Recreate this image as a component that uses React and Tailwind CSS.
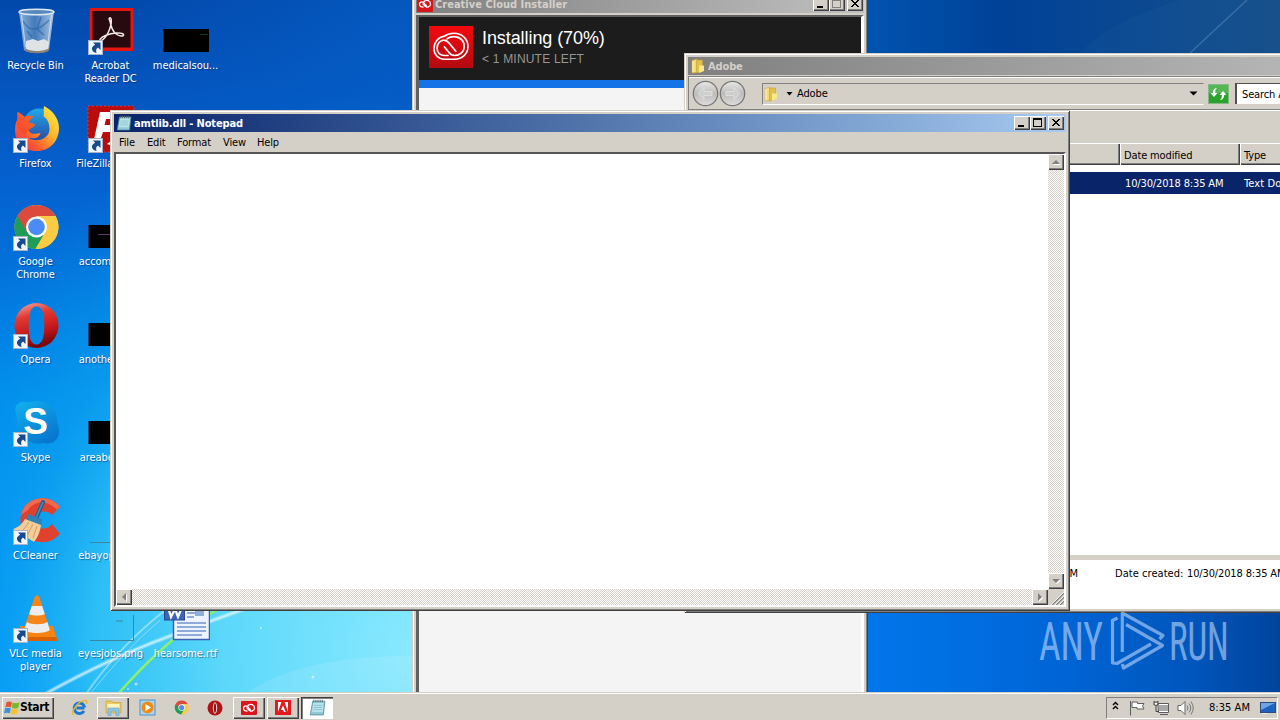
import React from 'react';
import clsx from 'clsx';

const RAISED = 'bg-[#d4d0c8] shadow-[inset_1px_1px_0_#fff,inset_-1px_-1px_0_#404040,inset_-2px_-2px_0_#808080]';
const FRAME = 'bg-[#d4d0c8] shadow-[inset_1px_1px_0_#d4d0c8,inset_-1px_-1px_0_#404040,inset_2px_2px_0_#fff,inset_-2px_-2px_0_#808080]';
const DITHER = 'bg-[repeating-conic-gradient(#fff_0_25%,#d4d0c8_0_50%)] bg-[length:2px_2px]';

/* ---------- small shared drawings ---------- */

const ShortcutArrow = () => (
    <svg className="absolute left-[1px] bottom-0 w-[15px] h-[15px]" viewBox="0 0 15 15">
        <rect x=".5" y=".5" width="14" height="14" fill="#f2f5fa" stroke="#a5b4c8" />
        <path d="M5 2.500h7.500v7.500l-2.500-2.500C8.200 8.500 7.600 10.300 8.600 13 3.500 12 2 7 7.200 4.700z" fill="#174a8c" />
    </svg>
);

const ChromeLogo = ({ className }) => (
    <svg className={className} viewBox="0 0 48 48">
        <circle cx="24.500" cy="24" r="22" fill="#fbcb43" />
        <path d="M24.500 24 5.400 13A22 22 0 0 1 43.600 13z" fill="#dc4a3d" />
        <path d="M5.400 13A22 22 0 0 0 23.500 46l10-17-9-5z" fill="#1f9d58" />
        <path d="M24.500 13h19.100A22 22 0 0 1 23.500 46l10-17z" fill="#fbcb43" />
        <path d="M5.400 13 15 29 24.500 13z" fill="#dc4a3d" />
        <circle cx="24.500" cy="24" r="10.500" fill="#fff" />
        <circle cx="24.500" cy="24" r="8.300" fill="#4c8bf5" />
    </svg>
);

const OperaLogo = ({ className }) => (
    <svg className={className} viewBox="0 0 48 48">
        <defs>
            <linearGradient id="opera" x1="0" y1="0" x2=".3" y2="1">
                <stop offset="0" stopColor="#f6b0a8" />
                <stop offset=".35" stopColor="#e23a34" />
                <stop offset=".75" stopColor="#c31418" />
                <stop offset="1" stopColor="#7d080c" />
            </linearGradient>
        </defs>
        <path
            fillRule="evenodd"
            d="M24.500 2a22 22.500 0 1 0 0 45a22 22.500 0 1 0 0-45zM24.500 5.500c6 0 7.800 8 7.800 19s-1.800 19-7.800 19-7.800-8-7.800-19 1.800-19 7.800-19z"
            fill="url(#opera)"
        />
    </svg>
);

const NotepadIcon = ({ className }) => (
    <svg className={className} viewBox="0 0 16 16">
        <path d="M3.500 2h11.500l-1.500 13H1.200z" fill="#8fc9d6" stroke="#4b8797" strokeWidth=".7" />
        <path d="M4 3.500h9.800l-1 8.800H2.800z" fill="#b9e4ea" />
        <path d="M4.500 6h8M4.200 8h8M4 10h8" stroke="#78b4c4" strokeWidth=".6" />
        <path d="M4.500.7v2.500M6.500.7v2.500M8.500.7v2.500M10.500.7v2.500M12.500.7v2.500" stroke="#56646c" strokeWidth=".8" />
    </svg>
);

const FolderIcon = ({ className }) => (
    <svg className={className} viewBox="0 0 16 16">
        <path d="M2 2.500 7 1v13.500L2 15z" fill="#f2dc74" stroke="#c9a63c" strokeWidth=".5" />
        <path d="M6.500 2h6v11.500l-6 1.500z" fill="#e3c04c" stroke="#bd9a34" strokeWidth=".5" />
        <path d="M9 7.500h5v5.500l-5 2z" fill="#f7e88e" />
        <path d="M3 3v11" stroke="#fff6bb" />
    </svg>
);

const CreativeCloudMark = ({ className }) => (
    <svg className={className} viewBox="0 0 44 42">
        <g fill="none" stroke="#fff" strokeLinecap="round">
            <path d="M15.200 10.300C18 8.200 21.500 7.300 25 7.300c8 0 14 5.800 14 13.200s-6 12.700-13.500 12.700H15.500C9 33.200 5 28.500 5 22.500c0-6.500 4.500-11.500 10.200-12.200z" strokeWidth="1.500" />
            <path d="M18 12.800C20 11.200 22.300 10.600 25 10.600c6 0 10.200 4.400 10.200 9.600 0 5.500-4 9.300-9.700 9.300-2.800 0-4.500-1.500-6-3.500L15.500 21" strokeWidth="1.700" />
            <path d="M26.800 25.300 20 17c-1.500-1.800-3-2.900-5-2.900-4 0-6.900 3.600-6.900 7.900 0 4.500 3 7.500 7.400 7.500H19" strokeWidth="1.700" />
        </g>
    </svg>
);

/* reduced mark for 16px slots */
const MiniCloud = ({ className }) => (
    <svg className={className} viewBox="0 0 16 14">
        <path
            d="M9.500 9 6.800 5.800C4.500 3.800 2.500 5.500 2.500 7.300c0 2 1.600 3 3.500 2.700M7 4.500c2.500-2.200 6.500-.8 6.500 2.500 0 3-3.500 4-5.300 2.300L6 7"
            fill="none" stroke="#fff" strokeWidth="1.300" strokeLinecap="round"
        />
    </svg>
);

const WindowsFlag = ({ className }) => (
    <svg className={className} viewBox="0 0 16 16">
        <path d="M2.500 2.200Q5 .7 8 2.200L7 7.500Q4.500 6.200 1.300 7.500z" fill="#e4572e" />
        <path d="M8.700 2.500Q11.500 4 15.500 2.500L14.300 7.800Q11 9 7.800 7.700z" fill="#76b82a" />
        <path d="M1.100 8.300Q4 7 6.800 8.300L5.800 13.300Q3 12 0 13.300z" fill="#3c8fd8" />
        <path d="M7.500 8.600Q10.500 10 14 8.700L12.900 13.800Q9.500 15.200 6.500 13.700z" fill="#f8c22c" />
    </svg>
);

/* ---------- desktop icons ---------- */

const RecycleBin = () => (
    <svg className="w-12 h-12" viewBox="0 0 48 48">
        <defs>
            <linearGradient id="bin" x1="0" x2="1">
                <stop offset="0" stopColor="#a7c4df" />
                <stop offset=".45" stopColor="#4c82bd" />
                <stop offset="1" stopColor="#c9d9e8" />
            </linearGradient>
        </defs>
        <path d="M7 4 12 43c3 3.500 22 3.500 25 0L42 4z" fill="url(#bin)" opacity=".85" />
        <path d="m14 34 7-2 5 2 6-2 5 3-1 8c-4 3-19 3-22 0z" fill="#dfe3e6" />
        <path d="M13 41c4 4 20 4 24 0l-.5 3c-4 3-19 3-23 0z" fill="#8c8177" />
        <ellipse cx="24.500" cy="5" rx="17.500" ry="2.700" fill="#5789bd" stroke="#dce8f2" strokeWidth="1.500" />
        <path d="M11 14q5 9 12 8t14-9M29 10l-4 12 7 6M15 24l5 6" stroke="#2a5f9c" strokeWidth="1.500" fill="none" opacity=".6" />
        <path d="m9.500 8 4 32M39.500 8l-4 32" stroke="#e6f0f7" opacity=".7" />
    </svg>
);

const AcrobatIcon = () => (
    <svg className="w-12 h-12" viewBox="0 0 48 48">
        <rect x="2.500" y="1" width="44" height="43" fill="#e6150f" />
        <rect x="5.500" y="4" width="38" height="36.500" fill="#270a0f" />
        <path
            d="M23 14c-2-3 .8-5 1.300-1.200.4 7.500-5 18.700-10.300 21-2.500.5-1.500-3 5-5.500 6-2.300 16-3.300 17.500-.8.700 2.500-4.500 2-8-1-4-3.500-4.600-7.500-5.500-12.500z"
            fill="none" stroke="#f4e9e7" strokeWidth="1.500"
        />
    </svg>
);

const FirefoxIcon = () => (
    <svg className="w-12 h-12" viewBox="0 0 48 48">
        <defs>
            <linearGradient id="fox" x1="1" y1="0" x2="0" y2="1">
                <stop offset="0" stopColor="#fff34a" />
                <stop offset=".4" stopColor="#ffb52a" />
                <stop offset=".7" stopColor="#fb5a30" />
                <stop offset="1" stopColor="#e02a5c" />
            </linearGradient>
            <linearGradient id="globe" x2="0" y2="1">
                <stop offset="0" stopColor="#1fa9e8" />
                <stop offset="1" stopColor="#2a4fa8" />
            </linearGradient>
        </defs>
        <circle cx="27" cy="19" r="15.500" fill="url(#globe)" />
        <path
            d="M32 1c8 4 15 12 15 22 0 13-9 23-22 23C12 46 3 38 3 25c0-4 .5-8 2.500-10.500V7c3 1 5 3 7 5 3-1.500 6-1.500 9-.5-2 1-5 4-4.500 6l6 2c-.5 3-5.500 3.500-6.500 6 3 5 8 3 12 2.500-2 6-8 6-12 4.500 7 6 21.500 1.500 21-9C37.300 17 35 14 31.500 11c1-4-.5-7 .5-10z"
            fill="url(#fox)"
        />
        <path d="M5.500 7c3 1 5 3 7 5 3-1.500 6-1.500 9-.5-2 1-5 4-4.500 6l6 2c-.5 3-5.500 3.500-6.500 6l-3 5c-6-2-11-10-8-16z" fill="#f4482f" opacity=".75" />
    </svg>
);

const FileZillaIcon = () => (
    <svg className="w-12 h-12" viewBox="0 0 48 48">
        <rect x="1" y="1" width="46" height="46" fill="#b90d0d" stroke="#d93a3a" strokeDasharray="2 2" />
        <path d="M13 7h27l-2 7H19l-1.500 6H33l-2 7H16l-4 12H6z" fill="#fff" />
        <path d="m20 39 8-6 8 2-8 7z" fill="#fff" />
    </svg>
);

const SkypeIcon = () => (
    <div className="relative w-12 h-12">
        <svg className="w-12 h-12" viewBox="0 0 48 48">
            <defs>
                <linearGradient id="skype" x2=".7" y2="1">
                    <stop offset="0" stopColor="#12b2ee" />
                    <stop offset="1" stopColor="#0676cf" />
                </linearGradient>
            </defs>
            <path d="M4 15C1 7 7 2 14 3c3 1 6-1 10-1 13 0 21 9 21 20 0 4 3 6 2 12-1 8-8 12-15 10-15 3-27-6-27-19 0-4 0-6-1-10z" fill="url(#skype)" />
        </svg>
        <span className="absolute inset-0 flex items-center justify-center pb-[3px] font-['Liberation_Sans',sans-serif] text-[37px] font-bold leading-none tracking-normal text-white">S</span>
    </div>
);

const CCleanerIcon = () => (
    <svg className="w-12 h-12" viewBox="0 0 48 48">
        <path d="M48 10C38-4 13-1 9 18 5 38 25 52 42 42l6-5-8-10c-5 7-16 6-17-3 0-9 10-13 17-6z" fill="#e0412f" />
        <path d="M48 10C38-4 13-1 9 18l7-5C22 3 37 3 45 13z" fill="#f2694c" />
        <path d="m31 5-7 17" stroke="#1d5f91" strokeWidth="4" strokeLinecap="round" />
        <path d="m31 5-6.500 15" stroke="#3696c8" strokeWidth="1.500" />
        <path d="m16 17 14 5-1 7-15-6z" fill="#2e82b8" />
        <path d="M13 22 29 28c-1 7-3 12-7 17L1 32c6-2 9-5 12-10z" fill="#f4cc98" />
        <path d="M17 25 9 36M21 27l-6 12M25 29l-4 12" stroke="#d39d60" />
    </svg>
);

const VlcIcon = () => (
    <svg className="w-12 h-12" viewBox="0 0 48 48">
        <path d="M8 31h33l4.500 14.500H12z" fill="#f58310" />
        <path d="M10 42h34.500l1 4H12z" fill="#d96207" />
        <path d="M22.500 2.500c1-3 4-3 5 0L38 35c-4 5-22 5-26.500 0z" fill="#f7861a" />
        <path d="M19.800 11h10.400l2.600 8c-4 2-12 2-15.600 0zM15 27c4 3 16 3 20.400 0l2.400 8c-4 4-22 4-26 0z" fill="#ededed" />
    </svg>
);

const WordDocIcon = () => (
    <svg className="w-12 h-12" viewBox="0 0 48 48">
        <rect x="11.500" y="1.500" width="36" height="43" fill="#eef4ff" stroke="#3c62ad" strokeWidth="1.500" />
        <path d="M25 18h8M25 22h7M15 28h29M15 32h29M15 36h29M15 40h25" stroke="#6f93d1" strokeWidth="1.300" />
        <rect x="33" y="14" width="9" height="7" fill="#91add9" />
        <rect x="2.500" y="5" width="20" height="20" fill="#3d66ba" stroke="#27488f" />
        <path d="m6 12 3 10 4-8 3 8 4-10" fill="none" stroke="#fff" strokeWidth="2.200" />
    </svg>
);

const BlackThumb = ({ line }) => (
    <svg className="w-12 h-12" viewBox="0 0 48 48">
        <rect x="1.500" y="22" width="45.500" height="23" fill="#000" />
        {line && <path d={line.d} stroke={line.color} />}
    </svg>
);

const ClearThumb = () => (
    <svg className="w-12 h-12" viewBox="0 0 48 48">
        <path d="M3 45.500h43.500V20M29 26h7" fill="none" stroke="#3c87a0" strokeWidth="1" />
    </svg>
);

const DesktopIcon = ({ icon, label, shortcut }) => (
    <div className="flex h-[98px] w-[75px] shrink-0 flex-col items-center pt-[7px]">
        {icon && <div className="relative h-12 w-12">{icon}{shortcut && <ShortcutArrow />}</div>}
        <p className="mt-[4px] whitespace-pre text-center leading-[13px] tracking-[-0.050px] text-white [text-shadow:1px_1px_1px_rgba(0,30,80,.5)]">{label}</p>
    </div>
);

const COLUMNS = [
    [
        { label: 'Recycle Bin', icon: <RecycleBin /> },
        { label: 'Firefox', icon: <FirefoxIcon />, shortcut: true },
        { label: 'Google\nChrome', icon: <ChromeLogo className="w-12 h-12" />, shortcut: true },
        { label: 'Opera', icon: <OperaLogo className="w-12 h-12" />, shortcut: true },
        { label: 'Skype', icon: <SkypeIcon />, shortcut: true },
        { label: 'CCleaner', icon: <CCleanerIcon />, shortcut: true },
        { label: 'VLC media\nplayer', icon: <VlcIcon />, shortcut: true },
    ],
    [
        { label: 'Acrobat\nReader DC', icon: <AcrobatIcon />, shortcut: true },
        { label: 'FileZilla Client', icon: <FileZillaIcon />, shortcut: true },
        { label: 'accommod...', icon: <BlackThumb line={{ d: 'M11 31.500h26', color: '#5a3a66' }} /> },
        { label: 'anotherhot...', icon: <BlackThumb /> },
        { label: 'areabegin....', icon: <BlackThumb /> },
        { label: 'ebayoption...', icon: <ClearThumb /> },
        { label: 'eyesjobs.png', icon: <ClearThumb /> },
    ],
    [
        { label: 'medicalsou...', icon: <BlackThumb line={{ d: 'M38 27.500h8', color: '#16352a' }} /> },
        {}, {}, {}, {}, {},
        { label: 'hearsome.rtf', icon: <WordDocIcon /> },
    ],
];

const Wallpaper = () => (
    <svg className="absolute inset-0 h-full w-full" viewBox="0 0 1280 720" preserveAspectRatio="none">
        <defs>
            <linearGradient id="base" x1="0" y1="0" x2="0" y2="1">
                <stop offset="0" stopColor="#0349ac" />
                <stop offset=".25" stopColor="#0561cf" />
                <stop offset=".55" stopColor="#008aea" />
                <stop offset="1" stopColor="#0095fb" />
            </linearGradient>
            <linearGradient id="shade" x1="0" x2="1">
                <stop offset=".6" stopColor="#0078ec" stopOpacity="0" />
                <stop offset=".68" stopColor="#0076ea" />
                <stop offset=".82" stopColor="#0066d8" />
                <stop offset=".93" stopColor="#0056bc" />
                <stop offset="1" stopColor="#00449c" />
            </linearGradient>
            <linearGradient id="top" x1="0" x2="1">
                <stop offset=".1" stopColor="#0560c8" stopOpacity="0" />
                <stop offset=".3" stopColor="#0560c8" stopOpacity=".6" />
                <stop offset=".68" stopColor="#0053ae" />
                <stop offset=".78" stopColor="#004299" />
                <stop offset="1" stopColor="#164e88" />
            </linearGradient>
            <radialGradient id="glow" gradientUnits="userSpaceOnUse" cx="420" cy="650" r="560">
                <stop offset="0" stopColor="#8beaff" />
                <stop offset=".35" stopColor="#5cd8fa" />
                <stop offset=".58" stopColor="#32c4f6" stopOpacity=".9" />
                <stop offset=".74" stopColor="#12aaf2" stopOpacity=".5" />
                <stop offset="1" stopColor="#0099f0" stopOpacity="0" />
            </radialGradient>
        </defs>
        <rect width="1280" height="720" fill="url(#base)" />
        <rect width="1280" height="720" fill="url(#glow)" />
        <rect y="500" width="1280" height="220" fill="url(#shade)" />
        <rect width="1280" height="112" fill="url(#top)" />
        <path d="M1190 53 1247 0" stroke="#5c8dbd" strokeWidth="1.500" opacity=".55" />
        <path d="M1080 53Q1110 20 1180 0h100v53z" fill="#2c6ba6" opacity=".12" />
        <g fill="none" stroke="#fff">
            <path d="M45 694Q110 658 170 636T250 607" strokeWidth="4" opacity=".35" />
            <path d="M45 694Q110 658 170 636T250 607" strokeWidth="1.500" opacity=".5" />
            <path d="M86 694Q120 645 168 608" strokeWidth="2" opacity=".4" />
            <path d="M90 694Q125 650 160 620" strokeWidth="1" opacity=".4" />
        </g>
        <path d="M118 694Q150 658 174 639T222 607" fill="none" stroke="#8cf06a" strokeWidth="2.500" />
        <path d="M245 694Q300 655 415 656v38z" fill="#fff" opacity=".1" />
        <g fill="#fff" opacity=".6">
            <circle cx="136" cy="684" r="1.500" />
            <circle cx="128" cy="689" r="1" />
            <circle cx="313" cy="677" r="1.500" />
            <circle cx="261" cy="628" r="1" />
        </g>
    </svg>
);

/* ---------- window chrome ---------- */

const CaptionButton = ({ kind, dim, className }) => (
    <div className={clsx('h-[14px] w-4', RAISED, className)}>
        <svg className="h-[14px] w-4" viewBox="0 0 16 14" shapeRendering="crispEdges">
            {kind === 'min' && <path d="M4 9h6v2H4z" fill="#000" />}
            {kind === 'max' && (
                <path d="M3 2h9v9H3zM4 4v6h7V4z" fillRule="evenodd" fill={dim ? '#808080' : '#000'} />
            )}
            {kind === 'close' && <path d="M4 3h2v1h1v1h2V4h1V3h2v1h-1v1h-1v1H9v1h1v1h1v1h1v1h-2V9H9V8H7v1H6v1H4V9h1V8h1V7h1V6H6V5H5V4H4z" fill="#000" />}
        </svg>
    </div>
);

const TitleBar = ({ icon, title, active, buttons, dim, fill }) => (
    <div className={clsx('flex h-[18px] shrink-0 items-center pl-[2px] font-bold', dim ? 'pr-px tracking-[0.020px]' : 'pr-[2px] tracking-[-0.130px]', active ? 'text-white' : 'text-[#d4d0c8]', fill)}>
        {icon}
        <span className="ml-[2px] flex-1 whitespace-nowrap">{title}</span>
        {buttons && (
            <>
                <CaptionButton kind="min" />
                <CaptionButton kind="max" dim={dim} />
                <CaptionButton kind="close" className="ml-[2px]" />
            </>
        )}
    </div>
);

const ScrollButton = ({ d }) => (
    <div className={clsx('h-4 w-4 shrink-0', RAISED)}>
        <svg className="h-4 w-4" viewBox="0 0 16 16">
            <path d={d} fill="#fff" transform="translate(1 1)" />
            <path d={d} fill="#808080" />
        </svg>
    </div>
);

const InstallerWindow = () => (
    <div className={clsx('absolute left-[412px] top-[-9px] flex h-[740px] w-[456px] flex-col p-[4px]', FRAME)}>
        <TitleBar
            title="Creative Cloud Installer"
            buttons
            dim
            fill="bg-linear-to-r from-[#808080] to-[#c0c0c0]"
            icon={<div className="ml-[-1px] flex h-4 w-4 items-center rounded-[1px] bg-[#d5161c]"><MiniCloud className="h-[14px] w-4" /></div>}
        />
        <div className="mt-[2px] flex flex-1 flex-col border-x-[3px] border-y-2 border-r-white border-b-white border-l-[#606060] border-t-[#606060] bg-[#f4f4f4]">
            <div className="flex h-[63px] bg-[#1c1c1c] pl-[10px] pt-[9px]">
                <div className="h-[42px] w-[44px] bg-linear-to-b from-[#f4090d] to-[#b30a10]">
                    <CreativeCloudMark className="h-[42px] w-[44px]" />
                </div>
                <div className="ml-[9px] font-['Liberation_Sans',sans-serif]">
                    <p className="mt-[2px] text-[18px] leading-[20px] tracking-[-0.080px] text-white">Installing (70%)</p>
                    <p className="mt-[4px] text-[12px] leading-[14px] tracking-[0.200px] text-[#969696]">&lt; 1 MINUTE LEFT</p>
                </div>
            </div>
            <div className="h-[8px] bg-[#1473e6]" />
        </div>
    </div>
);

const NavCircle = ({ flip }) => (
    <svg className={clsx('h-[27px] w-[27px]', flip && '-scale-x-100')} viewBox="0 0 27 27">
        <defs>
            <linearGradient id="nav" x2="0" y2="1">
                <stop offset="0" stopColor="#e9e9e7" />
                <stop offset=".5" stopColor="#bdbcba" />
                <stop offset="1" stopColor="#dedddb" />
            </linearGradient>
        </defs>
        <circle cx="13.500" cy="13.500" r="12.200" fill="url(#nav)" stroke="#777" strokeWidth="1.300" />
        <path d="m6 13.500 6-6v4h8v4h-8v4z" fill="#cfcfcd" stroke="#dededc" />
    </svg>
);

const ExplorerWindow = () => (
    <div className={clsx('absolute left-[684px] top-[53px] flex h-[560px] w-[640px] flex-col p-[4px]', FRAME)}>
        <TitleBar
            title="Adobe"
            fill="bg-linear-to-r from-[#808080] to-[#b8b8b8]"
            icon={<FolderIcon className="h-4 w-4" />}
        />
        <div className="mt-[1px] flex flex-1 flex-col border-l border-t border-[#808080]">
            <div className="flex h-[33px] shrink-0 items-center border-b border-t border-b-[#808080] border-t-white pl-[3px]">
                <NavCircle />
                <NavCircle flip />
                <div className="ml-[16px] flex h-[22px] w-[442px] items-center border border-b-white border-l-[#808080] border-r-[#d4d0c8] border-t-[#808080]">
                    <FolderIcon className="h-4 w-4" />
                    <svg className="ml-[7px] h-[4px] w-[7px]" viewBox="0 0 7 4"><path d="M.5 0h6L3.500 3.500z" /></svg>
                    <span className="ml-[4px] flex-1">Adobe</span>
                    <svg className="mr-[5px] h-[5px] w-[9px]" viewBox="0 0 9 5"><path d="M.5.5h8L4.500 4.500z" /></svg>
                </div>
                <svg className="ml-[4px] h-[20px] w-[21px]" viewBox="0 0 21 20">
                    <rect x=".5" y=".5" width="20" height="19" fill="#29a32c" stroke="#85b886" />
                    <path d="M1 1h19v8H1z" fill="#6fc76e" opacity=".6" />
                    <path d="M9.500 4Q7 4.500 7.200 9h2.300L6 13 2.500 9h2.300Q5 4 9.500 4zM11.500 16Q14 15.500 13.800 11h-2.300L15 7l3.500 4h-2.300q-.2 5-4.700 5z" fill="#fff" />
                </svg>
                <div className="ml-[6px] flex h-[21px] flex-1 items-center border-l-2 border-t border-[#505050] bg-white pl-[5px]">Search Adobe</div>
            </div>
            <div className="h-[33px] shrink-0 border-t border-white" />
            <div className="flex h-[22px] shrink-0">
                <div className={clsx('w-[431px]', RAISED)} />
                <div className={clsx('flex w-[120px] items-center pl-[4px] pt-[2px]', RAISED)}>Date modified</div>
                <div className={clsx('flex flex-1 items-center pl-[4px] pt-[2px]', RAISED)}>Type</div>
            </div>
            <div className="flex-1 bg-white pt-[7px]">
                <div className="flex h-[22px] items-center bg-[#0a246a] text-white">
                    <span className="ml-[436px] w-[119px] whitespace-nowrap">10/30/2018 8:35 AM</span>
                    <span className="whitespace-nowrap tracking-[0.100px]">Text Document</span>
                </div>
            </div>
            <div className="h-[5px] shrink-0 bg-[#d4d0c8]" />
            <div className="flex h-[49px] shrink-0 bg-white pt-[7px] whitespace-nowrap">
                <span className="w-[389px] text-right">10/30/2018 8:35 AM</span>
                <span className="ml-[37px] w-[72px] tracking-[0.050px]">Date created:</span>
                <span>10/30/2018 8:35 AM</span>
            </div>
        </div>
    </div>
);

const NotepadWindow = () => (
    <div className={clsx('absolute left-[110px] top-[110px] flex h-[501px] w-[960px] flex-col p-[4px]', FRAME)}>
        <TitleBar
            title="amtlib.dll - Notepad"
            active
            buttons
            fill="bg-linear-to-r from-[#0a246a] to-[#a6caf0]"
            icon={<NotepadIcon className="h-4 w-4" />}
        />
        <div className="flex h-[20px] shrink-0 items-center pl-[5px]">
            <span className="w-[28px]">File</span>
            <span className="w-[30px]">Edit</span>
            <span className="w-[46px]">Format</span>
            <span className="w-[34px]">View</span>
            <span>Help</span>
        </div>
        <div className="flex flex-1 flex-col border-2 border-b-white border-l-[#555] border-r-white border-t-[#555] bg-white">
            <div className="flex flex-1">
                <div className="flex-1" />
                <div className={clsx('flex w-4 flex-col justify-between', DITHER)}>
                    <ScrollButton d="M4 10h8L8 6z" />
                    <ScrollButton d="M4 6h8l-4 4z" />
                </div>
            </div>
            <div className="flex h-4 shrink-0">
                <div className={clsx('flex flex-1 justify-between', DITHER)}>
                    <ScrollButton d="M10 4v8L6 8z" />
                    <ScrollButton d="M6 4v8l4-4z" />
                </div>
                <svg className="h-4 w-4 bg-[#d4d0c8]" viewBox="0 0 16 16">
                    <path d="M4 16 16 4M8 16l8-8M12 16l4-4" stroke="#808080" strokeWidth="1.500" />
                    <path d="M3 16 16 3M7 16l9-9M11 16l5-5" stroke="#fff" strokeWidth=".8" />
                </svg>
            </div>
        </div>
    </div>
);

const Watermark = () => (
    <div className="absolute left-[1039px] top-[608px] flex h-[66px] w-[194px] items-center text-[#cfe2ff] opacity-55 font-['Roboto',sans-serif] text-[53px] font-normal leading-none">
        <div className="w-[71px] pt-[2px]"><span className="inline-block origin-left scale-x-[0.710]">ANY</span></div>
        <svg className="h-[66px] w-[56px] shrink-0" viewBox="0 0 56 66">
            <g fill="none" stroke="currentColor" strokeWidth="3.200" strokeLinejoin="round">
                <path d="M7.500 10 2.500 12.500V55l4.500.5L41 36" />
                <path d="M12.300 44V5L53 27.500 49.500 31" />
                <path d="M16 16.500 52.500 37.500 13.500 60 12.300 56" />
            </g>
        </svg>
        <div className="ml-[3px] w-[60px] pt-[2px]"><span className="inline-block origin-left scale-x-[0.660]">RUN</span></div>
    </div>
);

/* ---------- taskbar ---------- */

const TaskButton = ({ children, flat, pressed }) => (
    <div
        className={clsx(
            'flex h-[22px] w-8 items-center justify-center',
            !flat && !pressed && RAISED,
            pressed && 'bg-white shadow-[inset_1px_1px_0_#404040,inset_2px_2px_0_#808080,inset_-1px_-1px_0_#fff]'
        )}
    >
        {children}
    </div>
);

const Taskbar = () => (
    <div className="absolute inset-x-0 bottom-0 flex h-[28px] items-center border-t border-[#d4d0c8] bg-[#d4d0c8] pl-[2px] pt-[2px] shadow-[inset_0_1px_0_#fff]">
        <div className={clsx('flex h-[22px] w-[52px] items-center pl-[2px] text-[12px] font-bold tracking-[-0.350px]', RAISED)}>
            <WindowsFlag className="h-4 w-4" />
            <span>Start</span>
        </div>
        <div className="ml-[9px] flex gap-[2px]">
            <TaskButton flat>
                <svg className="h-[17px] w-[17px]" viewBox="0 0 17 17">
                    <path d="M13.500 9H5.500M13 12A5.300 5.300 0 1 1 13.700 8.500" fill="none" stroke="#1d78cf" strokeWidth="3" />
                    <path d="M2.500 15.500C-1 15 5 4 12 1.800c4-1.200 4.500 1 3 3.200" fill="none" stroke="#e8b72c" strokeWidth="1.400" />
                </svg>
            </TaskButton>
            <TaskButton>
                <svg className="h-[17px] w-[17px]" viewBox="0 0 17 17">
                    <path d="M1 2h6l1 1.500h8V14H1z" fill="#eccb5e" stroke="#c29b37" strokeWidth=".6" />
                    <path d="M2.500 5h12v5h-12z" fill="#fdf3bf" />
                    <path d="M3 9h11v7.500h-3V12H6v4.500H3z" fill="#8ec5e8" stroke="#5994bd" strokeWidth=".5" />
                </svg>
            </TaskButton>
            <TaskButton flat>
                <svg className="h-[17px] w-[17px]" viewBox="0 0 17 17">
                    <rect x="1" y="1" width="15" height="15" fill="#a9d5f2" stroke="#4a94c9" />
                    <circle cx="8.500" cy="8.500" r="6" fill="#f28a12" />
                    <path d="m6.500 5 5.500 3.500L6.500 12z" fill="#fff" />
                </svg>
            </TaskButton>
            <TaskButton flat><ChromeLogo className="h-[15px] w-[15px]" /></TaskButton>
            <TaskButton flat>
                <svg className="h-[16px] w-[16px]" viewBox="0 0 16 16">
                    <circle cx="8" cy="8" r="7.500" fill="#b31217" />
                    <ellipse cx="8" cy="8" rx="2.200" ry="5.800" fill="#e9dcda" />
                    <ellipse cx="8" cy="8" rx="1.100" ry="4.800" fill="#8f0f14" />
                </svg>
            </TaskButton>
            <TaskButton>
                <div className="flex h-[14px] w-[16px] items-center justify-center rounded-[1px] bg-[#d9151d]">
                    <MiniCloud className="h-[14px] w-4" />
                </div>
            </TaskButton>
            <TaskButton>
                <svg className="h-[15px] w-[16px]" viewBox="0 0 16 15">
                    <rect width="16" height="15" fill="#e01b1b" />
                    <path d="M3 2h3.500L3 12zM9.500 2H13v10zM8 5.500 10.800 12H9l-.8-2H6z" fill="#fff" />
                </svg>
            </TaskButton>
            <TaskButton pressed><NotepadIcon className="h-[17px] w-[17px]" /></TaskButton>
        </div>
        <div className="ml-auto mr-[2px] flex h-[22px] w-[172px] items-center border border-b-white border-l-[#808080] border-r-white border-t-[#808080] pl-[5px]">
            <svg className="mb-[3px] h-[10px] w-[7px]" viewBox="0 0 7 10">
                <path d="m1 4 2.500-2.500L6 4M1 8l2.500-2.500L6 8" fill="none" stroke="#000" strokeWidth="1.400" />
            </svg>
            <svg className="ml-[10px] h-4 w-[17px]" viewBox="0 0 17 16">
                <path d="M1.500 1v14.500M3 2h5.500v1.500H15L13.500 6 15 9H8V7.500H3z" fill="#fff" stroke="#5f5f5f" />
            </svg>
            <svg className="ml-[7px] h-4 w-4" viewBox="0 0 16 16">
                <rect x="5.500" y="4.500" width="10" height="7" fill="#a7a7a7" stroke="#fff" />
                <path d="M5 3.500h10.500v9H5.500zM7 14.500h8" fill="none" stroke="#5c5c5c" />
                <path d="M1 1v4h4V1M3 5v6.500h3M2 1v2M4 1v2" fill="none" stroke="#444" />
                <path d="M2 3h2v1.500H2z" fill="#fff" />
            </svg>
            <svg className="ml-[8px] h-4 w-[17px]" viewBox="0 0 17 16">
                <path d="M1 5.500h3L8 1.500v13l-4-4H1z" fill="#fff" stroke="#666" />
                <path d="M10 5.500q2 2.500 0 5M12 3.500q3.500 4.500 0 9M14 1.500q4.500 6.500 0 13" fill="none" stroke="#777" />
            </svg>
            <span className="ml-[15px] w-[51px] whitespace-nowrap tracking-[0.050px]">8:35 AM</span>
            <svg className="h-[14px] w-[16px]" viewBox="0 0 16 14">
                <rect x=".5" y="1.500" width="15" height="10" fill="#1d62bd" stroke="#2c4c80" />
                <path d="M1 2h14L1 9z" fill="#6fa5e4" />
                <path d="M2 12.500h5" stroke="#eee" />
            </svg>
        </div>
    </div>
);

const App = () => (
    <div className="relative h-[720px] w-[1280px] overflow-hidden font-['DejaVu_Sans_Condensed','DejaVu_Sans',sans-serif] text-[11px] leading-[13px] tracking-[-0.140px] text-black [font-stretch:condensed]">
        <Wallpaper />
        <div className="relative ml-[-2px] flex">
            {COLUMNS.map((column, i) => (
                <div key={i} className="flex flex-col">
                    {column.map((item, j) => <DesktopIcon key={j} {...item} />)}
                </div>
            ))}
        </div>
        <InstallerWindow />
        <ExplorerWindow />
        <NotepadWindow />
        <Watermark />
        <Taskbar />
    </div>
);

export default App;
